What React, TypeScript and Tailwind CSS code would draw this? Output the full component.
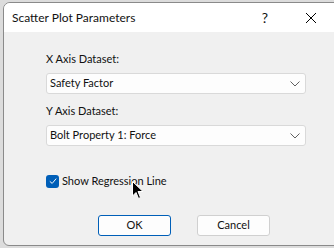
import React from "react";

function Chevron() {
  return (
    <svg viewBox="0 0 10 6" className="w-[10px] h-[6px]" fill="none" stroke="#606060" strokeWidth={1}>
      <path d="M0.5 0.5 L5 5 L9.5 0.5" />
    </svg>
  );
}

function Combo({ value }: { value: string }) {
  return (
    <div className="h-[21px] w-[260px] bg-[#fdfdfd] border border-[#d9d9d9] rounded-[3px] flex items-center justify-between pl-[3px] pr-[5px]">
      <span>{value}</span>
      <Chevron />
    </div>
  );
}

export default function App() {
  return (
    <div className="w-[334px] h-[248px] bg-[#dcdcdc] pl-[3px] pt-[2px] overflow-hidden relative" style={{ fontFamily: '"Segoe UI", Lato, "Liberation Sans", sans-serif' }}>
      <div className="w-[340px] h-[244px] bg-[#f0f0f0] border border-[#8a8a8a] rounded-t-[7px] rounded-b-[6px] flex flex-col text-[11px] text-[#111] overflow-hidden">
        <div className="h-[29px] bg-white flex items-center pl-[8px] shrink-0 text-[12px]">
          <span className="grow">Scatter Plot Parameters</span>
          <span className="w-[46px] text-center text-[14px]">?</span>
          <div className="w-[46px] flex justify-center mr-[8px]">
            <svg viewBox="0 0 10 10" className="w-[10px] h-[10px]" stroke="#000" strokeWidth={1}>
              <path d="M0 0 L10 10 M10 0 L0 10" />
            </svg>
          </div>
        </div>
        <div className="flex flex-col pl-[42px] pt-[19px]">
          <div className="h-[16px] leading-[16px]">X Axis Dataset:</div>
          <div className="mt-[6px]">
            <Combo value="Safety Factor" />
          </div>
          <div className="h-[16px] leading-[16px] mt-[9px]">Y Axis Dataset:</div>
          <div className="mt-[6px]">
            <Combo value="Bolt Property 1: Force" />
          </div>
          <div className="flex items-center mt-[28px] h-[14px]">
            <div className="w-[13px] h-[13px] rounded-[3px] bg-[#005fb8] flex items-center justify-center">
              <svg viewBox="0 0 10 10" className="w-[8px] h-[8px]" fill="none" stroke="#ffffff" strokeWidth={1.2}>
                <path d="M1 5.5 L4 8 L9 2" />
              </svg>
            </div>
            <span className="ml-[3px]">Show Regression Line</span>
          </div>
          <div className="flex mt-[27px] pl-[52px] gap-[26px]">
            <div className="w-[73px] h-[21px] rounded-[3px] border border-[#005fb8] bg-[#fdfdfd] flex items-center justify-center">OK</div>
            <div className="w-[73px] h-[21px] rounded-[3px] border border-[#d0d0d0] bg-[#fdfdfd] flex items-center justify-center">Cancel</div>
          </div>
        </div>
      </div>
      <svg viewBox="0 0 12 19" className="absolute left-[132px] top-[181px] w-[12px] h-[19px]">
        <path d="M0.5 0.5 L0.5 15 L4 11.5 L6.5 17.5 L8.5 16.5 L6 10.5 L11 10.5 Z" fill="#000" stroke="#fff" strokeWidth={1} />
      </svg>
    </div>
  );
}
